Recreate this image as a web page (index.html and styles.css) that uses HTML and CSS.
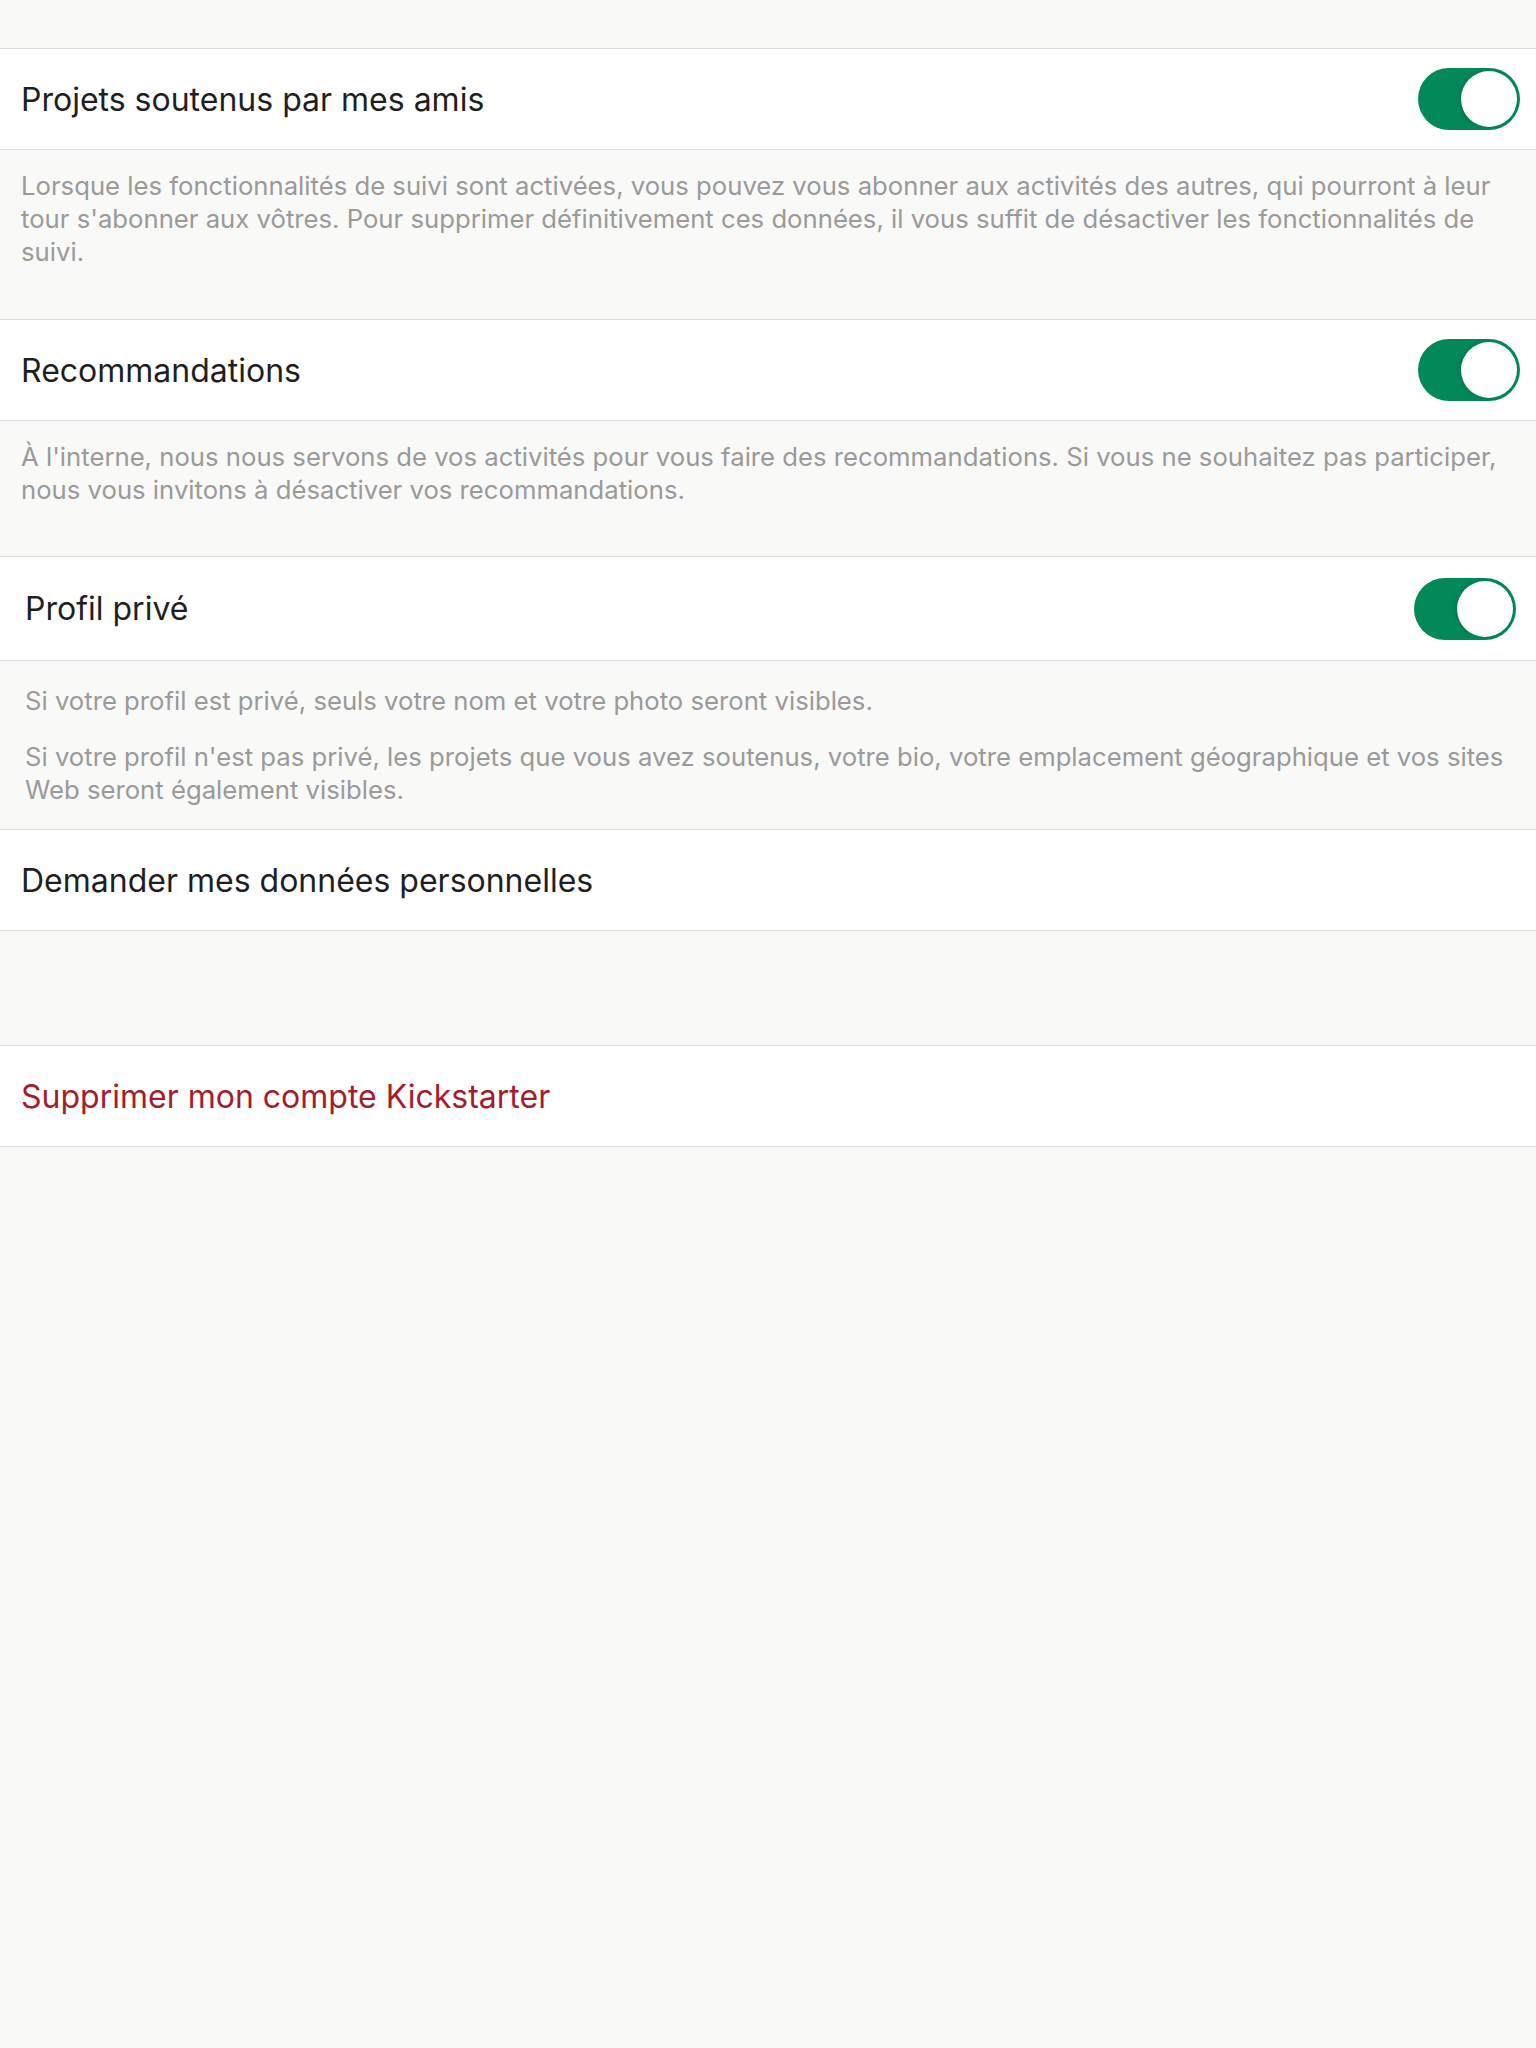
FILE: index.html
```html
<!DOCTYPE html>
<html lang="fr">
<head>
<meta charset="utf-8">
<title>Confidentialité</title>
<link rel="stylesheet" href="styles.css">
</head>
<body>
<main class="settings">
  <div class="top-gap"></div>

  <div class="cell">
    <span class="cell-title">Projets soutenus par mes amis</span>
    <span class="toggle is-on"><span class="knob"></span></span>
  </div>
  <div class="footer footer-1">
    <p>Lorsque les fonctionnalités de suivi sont activées, vous pouvez vous abonner aux activités des autres, qui pourront à leur tour s'abonner aux vôtres. Pour supprimer définitivement ces données, il vous suffit de désactiver les fonctionnalités de suivi.</p>
  </div>

  <div class="cell">
    <span class="cell-title">Recommandations</span>
    <span class="toggle is-on"><span class="knob"></span></span>
  </div>
  <div class="footer footer-2">
    <p>À l'interne, nous nous servons de vos activités pour vous faire des recommandations. Si vous ne souhaitez pas participer, nous vous invitons à désactiver vos recommandations.</p>
  </div>

  <div class="cell cell-private">
    <span class="cell-title">Profil privé</span>
    <span class="toggle is-on"><span class="knob"></span></span>
  </div>
  <div class="footer footer-3">
    <p>Si votre profil est privé, seuls votre nom et votre photo seront visibles.</p>
    <p>Si votre profil n'est pas privé, les projets que vous avez soutenus, votre bio, votre emplacement géographique et vos sites Web seront également visibles.</p>
  </div>

  <div class="cell">
    <span class="cell-title">Demander mes données personnelles</span>
  </div>

  <div class="section-gap"></div>

  <div class="cell">
    <span class="cell-title cell-danger">Supprimer mon compte Kickstarter</span>
  </div>
</main>
</body>
</html>
```

FILE: styles.css
```css
html, body {
  margin: 0;
  padding: 0;
  background: #f9f9f8;
}

body {
  font-family: Inter, "Noto Sans", "Liberation Sans", sans-serif;
  -webkit-font-smoothing: antialiased;
  min-height: 2048px;
}

.settings {
  display: flex;
  flex-direction: column;
}

.top-gap {
  height: 48px;
}

.cell {
  display: flex;
  align-items: center;
  justify-content: space-between;
  height: 100px;
  padding: 0 16px 0 21px;
  background: #ffffff;
  border-top: 1px solid #dcdcdc;
  border-bottom: 1px solid #dcdcdc;
}

.cell-private {
  height: 103px;
  padding: 0 20px 0 25px;
}

.cell-title {
  font-size: 32px;
  color: #1f1f1f;
}

.cell-danger {
  color: #a51c2d;
}

.toggle {
  position: relative;
  display: block;
  width: 102px;
  height: 62px;
  border-radius: 31px;
  background: #e9e9ea;
  flex-shrink: 0;
}

.toggle.is-on {
  background: #038858;
}

.knob {
  position: absolute;
  top: 3px;
  right: 3px;
  width: 56px;
  height: 56px;
  border-radius: 50%;
  background: #ffffff;
  box-shadow: -2px 0 4px rgba(0, 0, 0, 0.12);
}

.footer {
  padding: 0 21px;
  color: #9a9a9a;
  font-size: 25.7px;
  line-height: 33px;
}

.footer p {
  margin: 0;
}

.footer-1 {
  padding-top: 19px;
  padding-bottom: 51px;
}

.footer-2 {
  padding-top: 19px;
  padding-bottom: 50px;
}

.footer-3 {
  padding: 23px 25px 23px 25px;
}

.footer-3 p + p {
  margin-top: 23px;
}

.section-gap {
  height: 114px;
}
```
